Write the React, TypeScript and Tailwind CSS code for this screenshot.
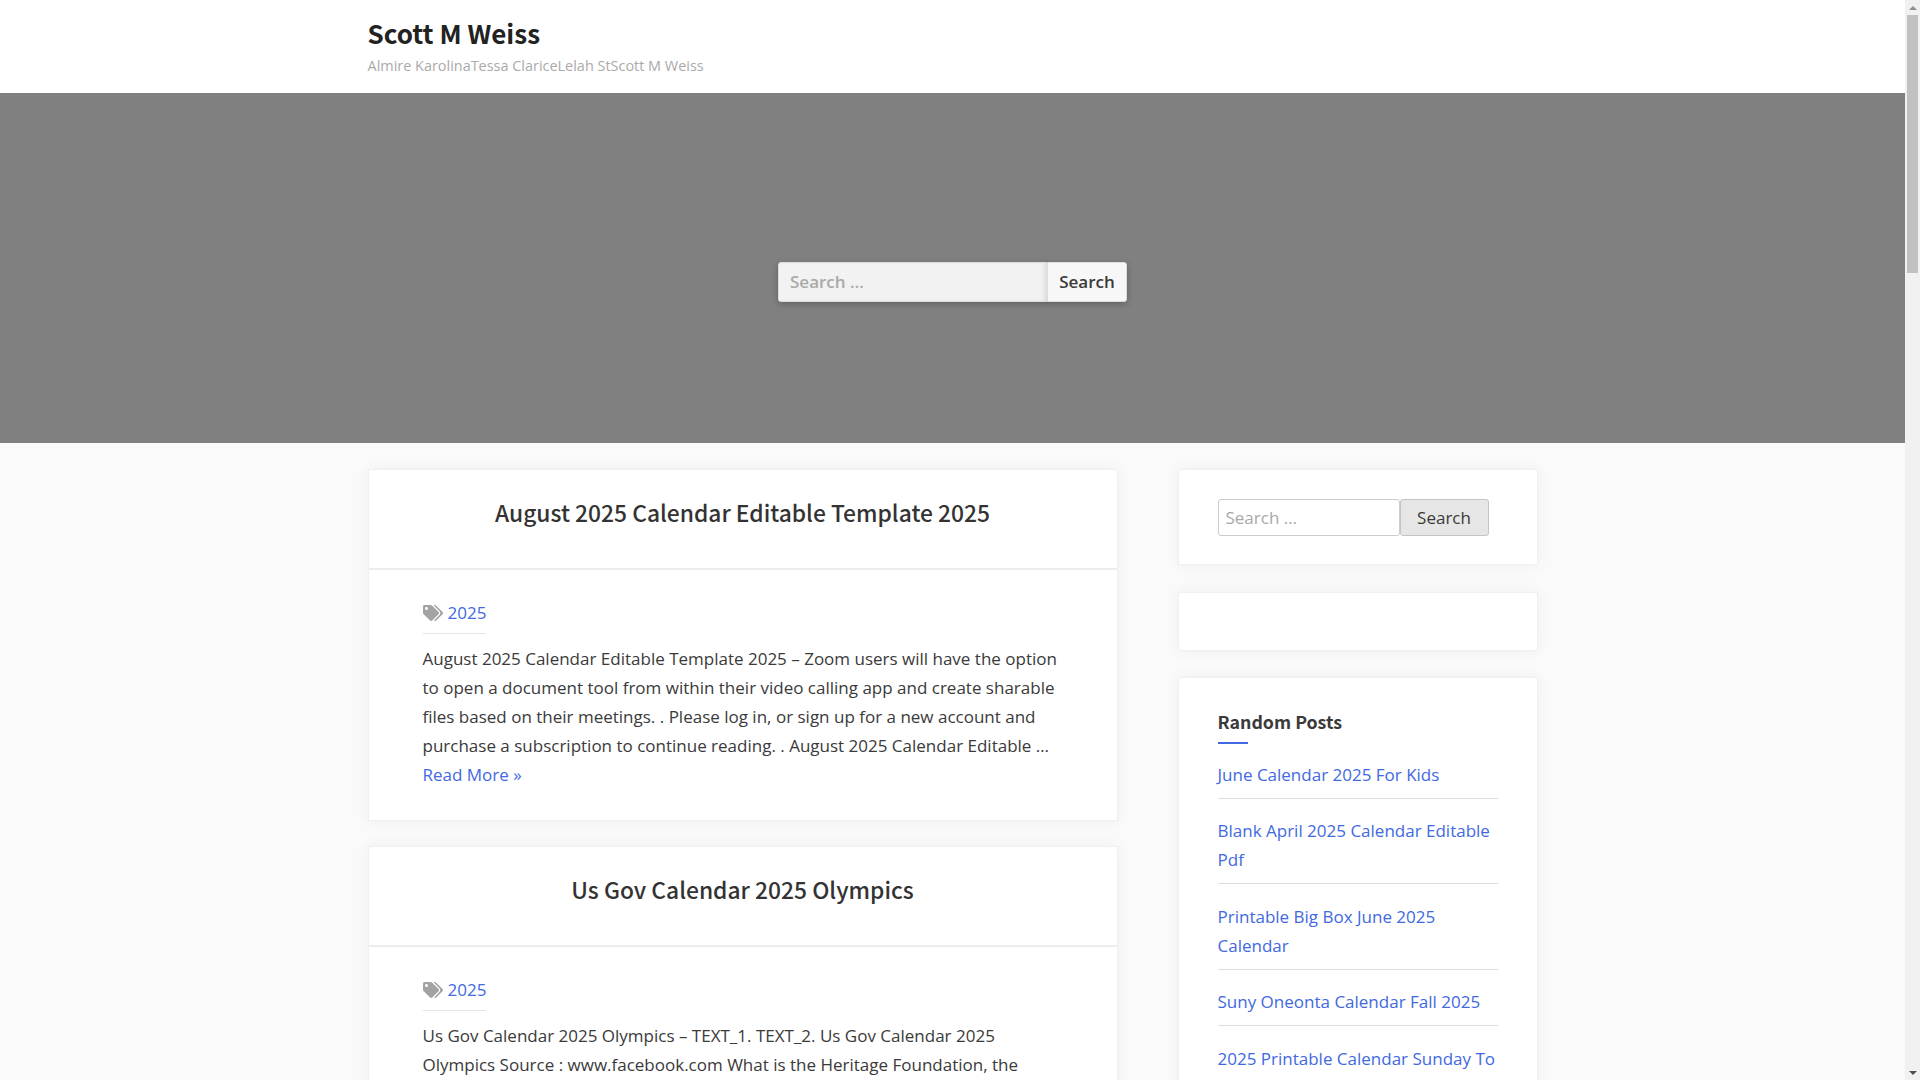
const heading = "font-['Noto_Sans_CJK_SC','Noto_Sans',sans-serif]";

const posts = [
  {
    title: "August 2025 Calendar Editable Template 2025",
    body: "August 2025 Calendar Editable Template 2025 – Zoom users will have the option to open a document tool from within their video calling app and create sharable files based on their meetings. . Please log in, or sign up for a new account and purchase a subscription to continue reading. . August 2025 Calendar Editable …",
  },
  {
    title: "Us Gov Calendar 2025 Olympics",
    body: "Us Gov Calendar 2025 Olympics – TEXT_1. TEXT_2. Us Gov Calendar 2025 Olympics Source : www.facebook.com What is the Heritage Foundation, the",
  },
];

const randomPosts = [
  "June Calendar 2025 For Kids",
  "Blank April 2025 Calendar Editable Pdf",
  "Printable Big Box June 2025 Calendar",
  "Suny Oneonta Calendar Fall 2025",
  "2025 Printable Calendar Sunday To",
];

function TagsIcon() {
  return (
    <svg viewBox="0 0 640 512" className="h-[16px] w-[20px] fill-[#a3a3a3]">
      <path d="M497.9 225.9 286.1 14.1A48 48 0 0 0 252.1 0H48C21.5 0 0 21.5 0 48v204.1a48 48 0 0 0 14.1 33.9l211.9 211.9c18.7 18.7 49.1 18.7 67.9 0l204.1-204.1c18.7-18.7 18.7-49.1-.1-67.9zM112 160c-26.5 0-48-21.5-48-48s21.5-48 48-48 48 21.5 48 48-21.5 48-48 48zm513.9 133.8L421.8 497.9c-18.7 18.7-49.1 18.7-67.9 0l-.4-.4L527.6 323.5c17-17 26.4-39.6 26.4-63.6s-9.4-46.6-26.4-63.6L331.3 0h48.7a48 48 0 0 1 33.9 14.1l211.9 211.9c18.8 18.7 18.8 49.1.1 67.8z" />
    </svg>
  );
}

function Post({ title, body }: { title: string; body: string }) {
  return (
    <article className="mb-[25px] border border-[#f0f0f0] bg-white shadow-[0_0_15px_rgba(0,0,0,0.05)]">
      <div className="flex h-[100px] justify-center border-b-2 border-[#ececec] pt-[23px]">
        <h2 className={`${heading} text-[22.8px] leading-[39px] font-medium text-[#333]`}>{title}</h2>
      </div>
      <div className="px-[54px] pt-[31px] pb-[31px]">
        <div className="inline-block border-b border-[#e5e5e5] pb-[8px]">
          <div className="flex h-[24px] items-center gap-[5px]">
            <TagsIcon />
            <a className="text-[17px] text-[#4169e1]">2025</a>
          </div>
        </div>
        <p className="mt-[10px] text-[17px] leading-[29px] text-[#3a3a3a]">{body}</p>
        <a className="block text-[17px] leading-[29px] text-[#4169e1]">Read More »</a>
      </div>
    </article>
  );
}

function SearchForm() {
  return (
    <div className="flex">
      <div className="flex h-[37px] w-[182px] items-center rounded-[3px] border border-[#ccc] bg-white px-[7px] text-[17px] text-[#a9a9a9]">
        Search …
      </div>
      <button className="h-[37px] w-[89px] rounded-[3px] border border-[#c4c4c4] bg-[#e6e6e6] text-[17px] text-[#3a3a3a]">
        Search
      </button>
    </div>
  );
}

function Scrollbar() {
  return (
    <div className="flex w-[15px] shrink-0 flex-col bg-[#f1f1f1]">
      <div className="flex h-[15px] items-center justify-center">
        <div className="h-0 w-0 border-x-[4px] border-b-[4px] border-x-transparent border-b-[#8f8f8f]" />
      </div>
      <div className="mx-[2px] h-[258px] bg-[#c1c1c1]" />
      <div className="flex-1" />
      <div className="flex h-[15px] items-center justify-center">
        <div className="h-0 w-0 border-x-[4px] border-t-[4px] border-x-transparent border-t-[#505050]" />
      </div>
    </div>
  );
}

export default function App() {
  return (
    <div className="flex h-screen overflow-hidden bg-[#fafafa] font-['Open_Sans','Noto_Sans',sans-serif]">
      <div className="min-w-0 flex-1 overflow-hidden">
        <header className="h-[93px] bg-white">
          <div className="mx-auto w-[1170px] pt-[13px]">
            <h1 className={`${heading} text-[26px] leading-[40px] font-semibold text-[#222]`}>Scott M Weiss</h1>
            <p className="mt-[2px] text-[14.45px] leading-[22px] text-[#aaa]">
              Almire KarolinaTessa ClariceLelah StScott M Weiss
            </p>
          </div>
        </header>

        <section className="flex h-[350px] items-center justify-center bg-[#808080]">
          <div className="flex h-[40px] translate-y-[14px] rounded-[3px] shadow-[0_2px_6px_rgba(0,0,0,0.25)]">
            <div className="flex w-[269px] items-center rounded-l-[3px] border border-[#ddd] bg-[#f2f2f2] px-[11px] text-[17px] font-semibold text-[#a9a9a9] shadow-[inset_-3px_0_3px_rgba(0,0,0,0.06)]">
              Search …
            </div>
            <button className="w-[80px] rounded-r-[3px] border border-[#ddd] bg-[#f7f7f7] text-[17px] font-semibold text-[#3a3a3a]">
              Search
            </button>
          </div>
        </section>

        <div className="mx-auto flex w-[1170px] justify-between pt-[26px]">
          <main className="w-[750px]">
            {posts.map((p) => (
              <Post key={p.title} title={p.title} body={p.body} />
            ))}
          </main>

          <aside className="w-[360px]">
            <div className="mb-[27px] h-[96px] border border-[#f0f0f0] bg-white px-[39px] pt-[29px] shadow-[0_0_15px_rgba(0,0,0,0.05)]">
              <SearchForm />
            </div>
            <div className="mb-[26px] h-[59px] border border-[#f0f0f0] bg-white shadow-[0_0_15px_rgba(0,0,0,0.05)]" />
            <div className="border border-[#f0f0f0] bg-white px-[39px] pt-[29px] pb-[20px] shadow-[0_0_15px_rgba(0,0,0,0.05)]">
              <h3 className={`${heading} text-[17.8px] leading-[28px] font-semibold text-[#3a3a3a]`}>Random Posts</h3>
              <div className="mt-[7px] h-[2px] w-[30px] bg-[#4169e1]" />
              <ul className="mt-[15.5px]">
                {randomPosts.map((t) => (
                  <li key={t} className="mb-[17.5px] border-b border-[#ddd] pb-[9px] text-[17px] leading-[29px] text-[#4169e1]">
                    {t}
                  </li>
                ))}
              </ul>
            </div>
          </aside>
        </div>
      </div>
      <Scrollbar />
    </div>
  );
}
